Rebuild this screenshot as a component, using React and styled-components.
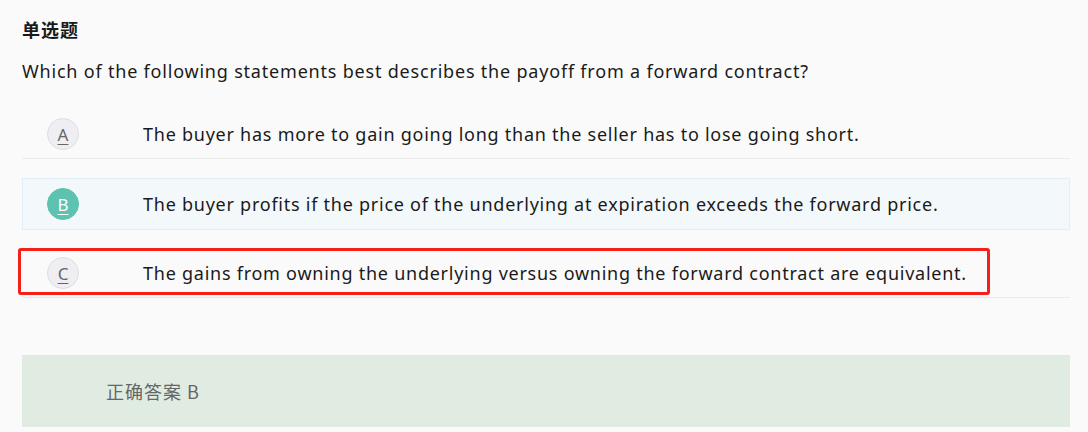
import React from "react";
import styled, { createGlobalStyle } from "styled-components";

const Global = createGlobalStyle`
  html, body { margin: 0; padding: 0; background: #fafafa; }
  body { font-family: "Noto Sans", "Noto Sans CJK SC", sans-serif; color: #1a1a1a; }
`;

const Page = styled.div`
  width: 1088px;
  height: 432px;
  box-sizing: border-box;
  padding: 0 18px 0 22px;
  background: #fafafa;
  overflow: hidden;
`;

const Kind = styled.div`
  font-family: "Noto Sans CJK SC", sans-serif;
  font-weight: 700;
  font-size: 18px;
  letter-spacing: 1px;
  line-height: 24px;
  padding-top: 17px;
`;

const Question = styled.div`
  font-size: 18px;
  letter-spacing: 0.8px;
  line-height: 26px;
  margin-top: 17px;
`;

const Options = styled.div`
  display: flex;
  flex-direction: column;
  gap: 19px;
  margin-top: 26px;
`;

const Option = styled.div`
  position: relative;
  display: flex;
  align-items: center;
  box-sizing: border-box;
  height: ${(p) => (p.$selected ? "52px" : "49px")};
  padding-left: ${(p) => (p.$selected ? "24px" : "25px")};
  background: ${(p) => (p.$selected ? "#f3f8fb" : "transparent")};
  border: ${(p) => (p.$selected ? "1px solid #e2eef8" : "0")};
  border-bottom: 1px solid ${(p) => (p.$selected ? "#e2eef8" : "#ececec")};
`;

const Badge = styled.span`
  flex: none;
  width: 32px;
  height: 32px;
  box-sizing: border-box;
  border-radius: 50%;
  display: flex;
  align-items: center;
  justify-content: center;
  font-size: 17px;
  text-decoration: underline;
  text-underline-offset: 3px;
  color: ${(p) => (p.$active ? "#ffffff" : "#666666")};
  background: ${(p) => (p.$active ? "#5dc2af" : "#efeff3")};
  border: 1px solid ${(p) => (p.$active ? "#5dc2af" : "#dedee2")};
`;

const OptionText = styled.span`
  margin-left: 64px;
  font-size: 18px;
  letter-spacing: 0.75px;
  line-height: 26px;
`;

const Mark = styled.div`
  position: absolute;
  left: -4px;
  top: -1px;
  width: 972px;
  height: 47px;
  box-sizing: border-box;
  border: 3px solid #f5201a;
  border-radius: 3px;
  pointer-events: none;
`;

const Answer = styled.div`
  margin-top: 57px;
  height: 72px;
  background: #e0ece2;
  display: flex;
  align-items: center;
  padding-left: 84px;
  font-family: "Noto Sans CJK SC", sans-serif;
  font-size: 18px;
  letter-spacing: 1px;
  color: #666666;
`;

const options = [
  { key: "A", text: "The buyer has more to gain going long than the seller has to lose going short." },
  { key: "B", text: "The buyer profits if the price of the underlying at expiration exceeds the forward price.", selected: true },
  { key: "C", text: "The gains from owning the underlying versus owning the forward contract are equivalent.", marked: true },
];

export default function App() {
  return (
    <Page>
      <Global />
      <Kind>单选题</Kind>
      <Question>Which of the following statements best describes the payoff from a forward contract?</Question>
      <Options>
        {options.map((o) => (
          <Option key={o.key} $selected={o.selected}>
            <Badge $active={o.selected}>{o.key}</Badge>
            <OptionText>{o.text}</OptionText>
            {o.marked && <Mark />}
          </Option>
        ))}
      </Options>
      <Answer>正确答案 B</Answer>
    </Page>
  );
}
